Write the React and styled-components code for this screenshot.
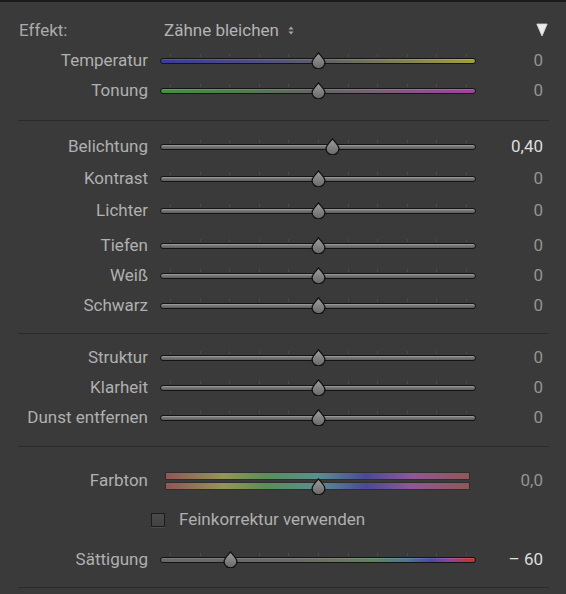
import React from "react";
import styled, { createGlobalStyle } from "styled-components";

const Global = createGlobalStyle`
  html, body {
    margin: 0;
    padding: 0;
    background: #3a3a3a;
  }
`;

const Panel = styled.div`
  width: 566px;
  height: 594px;
  box-sizing: border-box;
  background: #3a3a3a;
  border-top: 2px solid #1b1b1b;
  color: #b0b0b0;
  font-family: Roboto, "Noto Sans", sans-serif;
  font-size: 17px;
  overflow: hidden;
`;

const Header = styled.div`
  display: flex;
  align-items: center;
  height: 32px;
  margin-top: 12px;
  padding: 0 18px 0 19px;
`;

const HeaderLabel = styled.span`
  width: 145px;
  color: #aaaaaa;
`;

const Preset = styled.span`
  display: flex;
  align-items: center;
  gap: 9px;
  color: #b4b4b4;
  flex: 1;
`;

const Section = styled.div`
  padding-top: ${(p) => p.$pt || 0}px;
  padding-bottom: ${(p) => p.$pb || 0}px;
`;

const Divider = styled.div`
  height: 1px;
  background: #2b2b2b;
  margin: 0 17px 0 18px;
`;

const Row = styled.div`
  display: grid;
  grid-template-columns: 160px 316px 67px;
  align-items: center;
  height: ${(p) => p.$h || 30}px;
  margin-top: ${(p) => p.$mt || 0}px;
`;

const Label = styled.span`
  text-align: right;
  padding-right: 12px;
  margin-top: -2px;
  white-space: nowrap;
`;

const Value = styled.span`
  text-align: right;
  margin-top: -2px;
  color: ${(p) => (p.$bright ? "#dedede" : "#939393")};
`;

const TrackCell = styled.div`
  position: relative;
  height: 20px;
  display: flex;
  align-items: center;
`;

const Bar = styled.div`
  width: 100%;
  height: 6px;
  box-sizing: border-box;
  border: 1px solid #141414;
  border-radius: 3px;
  background: ${(p) => p.$bg};
  box-shadow: inset 0 1px 0 rgba(255, 255, 255, 0.14);
`;

const Ticks = styled.div`
  position: absolute;
  left: 10px;
  right: 9px;
  top: 3px;
  height: 3px;
  display: flex;
  justify-content: space-between;
  pointer-events: none;
`;

const Tick = styled.i`
  width: 1px;
  height: 3px;
  background: #4b4b4b;
`;

const ThumbWrap = styled.div`
  position: absolute;
  top: ${(p) => p.$top}px;
  width: 15px;
  height: 17px;
  margin-left: -7px;
  line-height: 0;
`;

const HueCell = styled.div`
  position: relative;
  height: 20px;
  display: flex;
  flex-direction: column;
  justify-content: center;
  gap: 2px;
  padding: 0 6px 0 5px;
`;

const HueBar = styled.div`
  height: 8px;
  box-sizing: border-box;
  border: 1px solid #2e2e2e;
  background: linear-gradient(
    to right,
    #8f5757 0%,
    #959558 19%,
    #5a8e58 33%,
    #5a8f90 50%,
    #4a4a94 66%,
    #8e5896 81%,
    #8f5757 100%
  );
`;

const CheckRow = styled.div`
  display: flex;
  align-items: center;
  gap: 14px;
  height: ${(p) => p.$h}px;
  padding-left: 151px;
`;

const Box = styled.span`
  width: 14px;
  height: 14px;
  box-sizing: border-box;
  border: 1px solid #1c1c1c;
  background: linear-gradient(#4a4a4a, #424242);
  box-shadow: 0 1px 0 #4c4c4c;
`;

const CheckText = styled.span`
  margin-top: -2px;
`;

const grey = "linear-gradient(to bottom, #8a8a8a, #5c5c5c)";

const gradients = {
  temp: "linear-gradient(to right, #3a3a9c 0%, #4a4a86 25%, #5e5e6c 50%, #78785a 70%, #a2a03c 100%)",
  tint: "linear-gradient(to right, #3e943c 0%, #527c4e 25%, #646464 50%, #7c5e7a 72%, #a440a2 100%)",
  grey,
  sat: "linear-gradient(to right, #686868 0%, #686868 40%, #6c7660 58%, #5a865e 68%, #4a7896 78%, #4a4aa8 86%, #9240a0 92%, #c23434 98%, #c83030 100%)",
};

function Thumb({ pos, top = 1 }) {
  return (
    <ThumbWrap $top={top} style={{ left: `${pos}%` }}>
      <svg width="15" height="17" viewBox="0 0 15 17">
        <defs>
          <linearGradient id="thumbFill" x1="0" y1="0" x2="0" y2="1">
            <stop offset="0" stopColor="#9e9e9e" />
            <stop offset="1" stopColor="#686868" />
          </linearGradient>
        </defs>
        <path
          d="M7.5 0.9 C9.5 3.6 13.9 7.4 13.9 10.4 A6.4 6.4 0 1 1 1.1 10.4 C1.1 7.4 5.5 3.6 7.5 0.9 Z"
          fill="url(#thumbFill)"
          stroke="#121212"
          strokeWidth="1.3"
        />
      </svg>
    </ThumbWrap>
  );
}

function Slider({ label, value, pos = 50, bg = grey, bright, h, mt }) {
  return (
    <Row $h={h} $mt={mt}>
      <Label>{label}</Label>
      <TrackCell>
        <Ticks>
          {Array.from({ length: 11 }, (_, i) => (
            <Tick key={i} />
          ))}
        </Ticks>
        <Bar $bg={bg} />
        <Thumb pos={pos} />
      </TrackCell>
      <Value $bright={bright}>{value}</Value>
    </Row>
  );
}

function UpDown() {
  return (
    <svg width="6" height="9" viewBox="0 0 6 9">
      <path d="M3 0.5 L5.5 3.5 L0.5 3.5 Z M3 8.5 L5.5 5.5 L0.5 5.5 Z" fill="#a8a8a8" />
    </svg>
  );
}

function Collapse() {
  return (
    <svg width="12" height="14" viewBox="0 0 12 14">
      <path d="M0.8 1 L11.2 1 L6 13 Z" fill="#ececec" stroke="#d8d8d8" strokeWidth="0.8" strokeLinejoin="round" />
    </svg>
  );
}

export default function App() {
  return (
    <>
      <Global />
      <Panel>
        <Header>
          <HeaderLabel>Effekt:</HeaderLabel>
          <Preset>
            Zähne bleichen
            <UpDown />
          </Preset>
          <Collapse />
        </Header>

        <Section $pb={14}>
          <Slider label="Temperatur" value="0" bg={gradients.temp} />
          <Slider label="Tonung" value="0" bg={gradients.tint} />
        </Section>
        <Divider />

        <Section $pt={10} $pb={12}>
          <Slider label="Belichtung" value="0,40" pos={54.5} bright h={32} />
          <Slider label="Kontrast" value="0" h={32} />
          <Slider label="Lichter" value="0" h={32} />
          <Slider label="Tiefen" value="0" mt={4} />
          <Slider label="Weiß" value="0" />
          <Slider label="Schwarz" value="0" />
        </Section>
        <Divider />

        <Section $pt={9} $pb={13}>
          <Slider label="Struktur" value="0" />
          <Slider label="Klarheit" value="0" />
          <Slider label="Dunst entfernen" value="0" />
        </Section>
        <Divider />

        <Section $pt={19} $pb={11}>
          <Row $h={30}>
            <Label>Farbton</Label>
            <HueCell>
              <HueBar />
              <HueBar />
              <Thumb pos={50} top={7} />
            </HueCell>
            <Value>0,0</Value>
          </Row>
          <CheckRow $h={48}>
            <Box />
            <CheckText>Feinkorrektur verwenden</CheckText>
          </CheckRow>
          <Slider label="Sättigung" value="– 60" pos={22} bg={gradients.sat} bright h={32} />
        </Section>
        <Divider />
      </Panel>
    </>
  );
}
